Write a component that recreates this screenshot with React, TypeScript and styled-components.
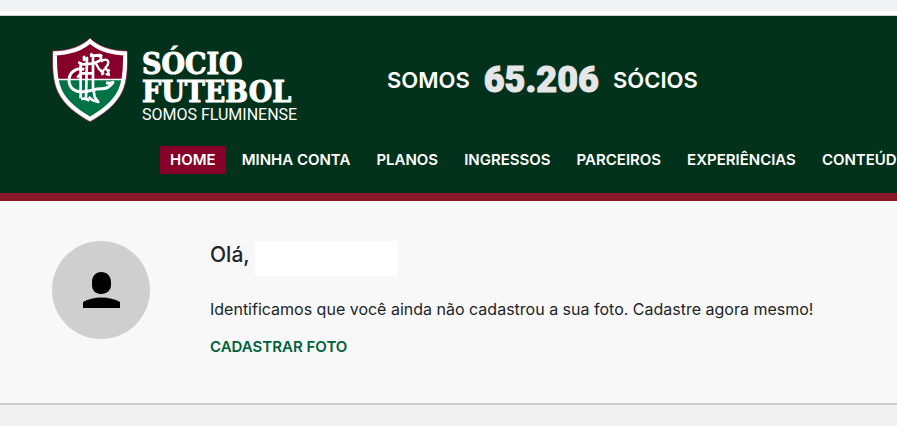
import React from "react";
import styled, { createGlobalStyle } from "styled-components";

const GlobalStyle = createGlobalStyle`
  *, *::before, *::after { box-sizing: border-box; }
  body {
    margin: 0;
    background: #f1f1f1;
    color: #212529;
    font-family: Inter, "Open Sans", sans-serif;
    overflow-x: hidden;
  }
`;

const BrowserEdge = styled.div`
  height: 16px;
  background: #fff;
  border-top: 11px solid #f0f2f4;
  border-bottom: 1px solid #cbd5cf;
`;

const Header = styled.header`
  padding: 21px 0 19px 52px;
  overflow: hidden;
  background: #02321c;
  border-bottom: 8px solid #8a1726;
  color: #fff;
`;

const HeaderTop = styled.div`
  display: flex;
  align-items: flex-start;
  gap: 94px;
`;

const Brand = styled.a`
  display: flex;
  gap: 14px;
  color: #fff;
  text-decoration: none;
`;

const Crest = styled.svg`
  display: block;
  flex: none;
  width: 76px;
  height: 86px;
`;

const BrandText = styled.span`
  display: flex;
  flex-direction: column;
  width: 151px;
  padding-top: 13px;
  white-space: nowrap;
`;

const BrandName = styled.span`
  font-family: "DejaVu Serif Condensed", "DejaVu Serif", serif;
  font-size: 30px;
  font-stretch: condensed;
  font-weight: 700;
  line-height: 28px;
  -webkit-text-stroke: 1px #fff;
`;

const BrandTagline = styled.span`
  font-family: Roboto, sans-serif;
  font-size: 16px;
  line-height: 17px;
`;

const Counter = styled.p`
  display: flex;
  align-items: center;
  gap: 14px;
  margin: 22px 0 0;
  font-size: 22px;
  font-weight: 600;
  line-height: 42px;
  white-space: nowrap;
`;

const CounterValue = styled.strong`
  color: #e6e6e6;
  font-family: Roboto, sans-serif;
  font-size: 36px;
  font-weight: 900;
  -webkit-text-stroke: 1px #e6e6e6;
`;

const Nav = styled.nav`
  display: flex;
  gap: 6px;
  margin: 23px 0 0 108px;
`;

const NavLink = styled.a<{ $active?: boolean }>`
  flex: none;
  padding: 0 10px;
  background: ${({ $active }) => ($active ? "#870029" : "transparent")};
  color: #fff;
  font-size: 15px;
  font-weight: 600;
  line-height: 28px;
  text-decoration: none;
  white-space: nowrap;
`;

const Profile = styled.main`
  display: flex;
  gap: 60px;
  padding: 40px 52px 44px;
  background: #f8f8f8;
  border-bottom: 2px solid #cecece;
`;

const Avatar = styled.div`
  display: flex;
  align-items: center;
  justify-content: center;
  flex: none;
  width: 98px;
  height: 98px;
  border-radius: 50%;
  background: #cfcfcf;
`;

const AvatarIcon = styled.svg`
  width: 37px;
  height: 37px;
`;

const Welcome = styled.div`
  min-width: 0;
`;

const Greeting = styled.h1`
  display: flex;
  gap: 5px;
  margin: 0;
  font-size: 21px;
  font-weight: 500;
  line-height: 28px;
`;

const MemberName = styled.span`
  width: 143px;
  height: 35px;
  background: #fff;
`;

const Message = styled.p`
  margin: 21px 0 0;
  font-size: 16px;
  line-height: 24px;
`;

const PhotoLink = styled.a`
  display: inline-block;
  margin-top: 14px;
  color: #00613c;
  font-size: 15px;
  font-weight: 600;
  line-height: 24px;
  text-decoration: none;
`;

const navItems = [
  "HOME",
  "MINHA CONTA",
  "PLANOS",
  "INGRESSOS",
  "PARCEIROS",
  "EXPERIÊNCIAS",
  "CONTEÚDOS",
];

const shield =
  "M150 24C129 46 91 63 38 63C36 112 39 155 53 185C72 225 110 253 150 275C190 253 228 225 247 185C261 155 264 112 262 63C209 63 171 46 150 24Z";

function ClubCrest() {
  return (
    <Crest viewBox="36 22 228 256" role="img" aria-label="Fluminense">
      <defs>
        <clipPath id="shield-clip">
          <path d={shield} />
        </clipPath>
      </defs>
      <g clipPath="url(#shield-clip)">
        <path fill="#870029" d="M36 20h228v128H36z" />
        <path fill="#007346" d="M36 150h228v128H36z" />
        <path fill="#fff" d="M36 146h228v5H36z" />
        <path d={shield} fill="none" stroke="#fff" strokeWidth="27" />
      </g>
      <path d={shield} fill="none" stroke="#8f1a3c" strokeWidth="2" />
      <g fill="none" stroke="#fff" strokeWidth="8" strokeLinejoin="round">
        <path d="M133 118C106 111 87 129 87 151C87 176 108 188 130 185C151 184 166 175 185 176C199 177 210 170 219 157L207 160L198 158" strokeWidth="9" />
        <path d="M132 77V90L141 84L138 205M123 207C133 205 140 205 148 212M123 203L119 199M115 96L125 103L158 101M122 96V202" />
        <path d="M159 76V171L164 201L175 216L158 211L146 201M150 77H169C184 76 187 85 179 92L159 101M151 71L159 77L181 75L186 80" />
        <path d="M168 101L177 117L188 125L193 117M183 95C198 82 209 92 203 105L196 114L204 124L209 119M204 124L207 135L197 132M177 117L190 130L184 134" strokeWidth="7" />
        <path d="M112 143L123 130H158" />
      </g>
    </Crest>
  );
}

export default function App() {
  return (
    <>
      <GlobalStyle />
      <BrowserEdge />
      <Header>
        <HeaderTop>
          <Brand href="#home">
            <ClubCrest />
            <BrandText>
              <BrandName>SÓCIO</BrandName>
              <BrandName>FUTEBOL</BrandName>
              <BrandTagline>SOMOS FLUMINENSE</BrandTagline>
            </BrandText>
          </Brand>
          <Counter>
            <span>SOMOS</span>
            <CounterValue>65.206</CounterValue>
            <span>SÓCIOS</span>
          </Counter>
        </HeaderTop>
        <Nav aria-label="Principal">
          {navItems.map((item, index) => (
            <NavLink
              key={item}
              href="#home"
              $active={index === 0}
              aria-current={index === 0 ? "page" : undefined}
            >
              {item}
            </NavLink>
          ))}
        </Nav>
      </Header>
      <Profile>
        <Avatar>
          <AvatarIcon viewBox="0 0 37 37" aria-hidden="true">
            <path d="M18 0C24 0 28 4 28 10V13C28 18 24 22 18 22S9 18 9 13V10C9 4 13 0 18 0ZM0 30C10 24 27 24 37 30V36H0Z" />
          </AvatarIcon>
        </Avatar>
        <Welcome>
          <Greeting>
            Olá, <MemberName />
          </Greeting>
          <Message>
            Identificamos que você ainda não cadastrou a sua foto. Cadastre
            agora mesmo!
          </Message>
          <PhotoLink href="#foto">CADASTRAR FOTO</PhotoLink>
        </Welcome>
      </Profile>
    </>
  );
}
